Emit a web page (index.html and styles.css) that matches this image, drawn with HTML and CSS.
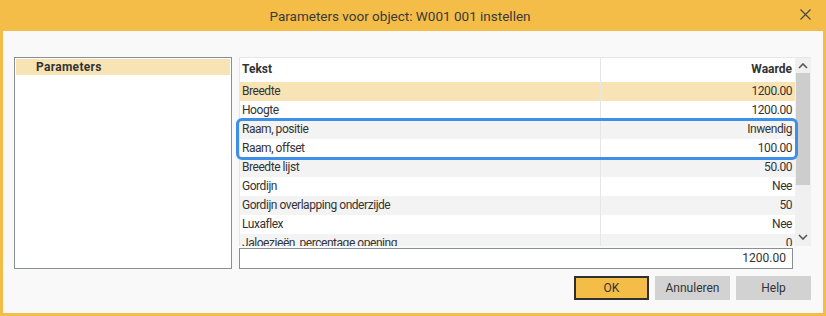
FILE: index.html
```html
<!DOCTYPE html>
<html lang="nl">
<head>
  <meta charset="UTF-8" />
  <title>Parameters voor object</title>
  <link rel="stylesheet" href="styles.css">
</head>
<body>
  <div class="dialog">
    <header class="titlebar">
      <span class="title">Parameters voor object: W001 001 instellen</span>
      <button class="close" aria-label="Sluiten">
        <svg width="11" height="11" viewBox="0 0 11 11"><path d="M0.5 0.5 L10.5 10.5 M10.5 0.5 L0.5 10.5" stroke="#444" stroke-width="1.1" fill="none"/></svg>
      </button>
    </header>

    <main class="content">
      <div class="panels">
        <div class="tree">
          <div class="tree-item">Parameters</div>
        </div>

        <div class="grid-col">
          <div class="grid">
            <div class="rows">
              <div class="row head"><span>Tekst</span><span>Waarde</span></div>
              <div class="row selected"><span>Breedte</span><span>1200.00</span></div>
              <div class="row"><span>Hoogte</span><span>1200.00</span></div>
              <div class="group">
                <div class="row alt"><span>Raam, positie</span><span>Inwendig</span></div>
                <div class="row"><span>Raam, offset</span><span>100.00</span></div>
              </div>
              <div class="row alt"><span>Breedte lijst</span><span>50.00</span></div>
              <div class="row"><span>Gordijn</span><span>Nee</span></div>
              <div class="row alt"><span>Gordijn overlapping onderzijde</span><span>50</span></div>
              <div class="row"><span>Luxaflex</span><span>Nee</span></div>
              <div class="row alt last"><span>Jaloezieën, percentage opening</span><span>0</span></div>
            </div>
            <div class="scrollbar">
              <div class="arrow up">
                <svg width="10" height="6" viewBox="0 0 10 6"><path d="M1 5 L5 1 L9 5" stroke="#555" stroke-width="1.6" fill="none"/></svg>
              </div>
              <div class="thumb"></div>
              <div class="track"></div>
              <div class="arrow down">
                <svg width="10" height="6" viewBox="0 0 10 6"><path d="M1 1 L5 5 L9 1" stroke="#555" stroke-width="1.6" fill="none"/></svg>
              </div>
            </div>
          </div>
          <div class="value-input">1200.00</div>
        </div>
      </div>

      <div class="actions">
        <button class="btn primary">OK</button>
        <button class="btn">Annuleren</button>
        <button class="btn">Help</button>
      </div>
    </main>
  </div>
</body>
</html>
```

FILE: styles.css
```css
:root {
  --accent: #f3bd48;
  --select: #f8e3b5;
  --text: #333;
  --line: #e6e6e6;
  --frame: #8a8f96;
  --focus: #3d8fe8;
}

* {
  margin: 0;
  padding: 0;
  box-sizing: border-box;
}

body {
  font-family: Roboto, 'Liberation Sans', sans-serif;
  font-size: 12px;
  color: var(--text);
  background: #fff;
}

.dialog {
  width: 826px;
  height: 316px;
  border: 3px solid var(--accent);
  border-top: none;
  background: #f9f9f9;
  display: flex;
  flex-direction: column;
}

.titlebar {
  height: 31px;
  margin: 0 -3px;
  background: var(--accent);
  display: flex;
  align-items: center;
  padding-right: 15px;
}

.title {
  flex: 1;
  text-align: center;
  font-size: 13.5px;
  color: #3a3a3a;
}

.close {
  background: none;
  border: none;
  width: 11px;
  height: 11px;
  display: flex;
  margin-top: -2px;
}

.content {
  flex: 1;
  display: flex;
  flex-direction: column;
  padding: 26px 12px 0 11px;
}

.panels {
  display: flex;
  gap: 7px;
  height: 212px;
}

.tree {
  width: 218px;
  border: 1px solid var(--frame);
  background: #fff;
  padding: 1px;
}

.tree-item {
  height: 16px;
  line-height: 16px;
  padding-left: 20px;
  background: var(--select);
  font-weight: bold;
  letter-spacing: 0.3px;
}

.grid-col {
  flex: 1;
  display: flex;
  flex-direction: column;
  gap: 2px;
}

.grid {
  height: 189px;
  display: flex;
  border-top: 1px solid var(--line);
  border-left: 1px solid var(--line);
  background: #fff;
}

.rows {
  flex: 1;
}

.row {
  display: grid;
  grid-template-columns: 361px 1fr;
  height: 19px;
  line-height: 19px;
  background: #fff;
  letter-spacing: -0.45px;
}

.row span {
  padding: 0 3px 0 2px;
  white-space: nowrap;
}

.row span:first-child {
  border-right: 1px solid var(--line);
}

.row span:last-child {
  text-align: right;
}

.row.head {
  height: 24px;
  line-height: 23px;
  font-weight: bold;
  letter-spacing: 0;
}

.row.alt {
  background: #f3f3f3;
}

.row.selected {
  background: var(--select);
}

.row.last {
  height: 12px;
  overflow: hidden;
}

.group {
  position: relative;
}

.group::after {
  content: '';
  position: absolute;
  inset: -2px -3px -2px -4px;
  border: 3px solid var(--focus);
  border-radius: 6px;
  pointer-events: none;
}

.scrollbar {
  width: 16px;
  background: #f0f0f0;
  display: flex;
  flex-direction: column;
}

.arrow {
  height: 15px;
  display: flex;
  align-items: center;
  justify-content: center;
}

.arrow.down {
  height: 18px;
}

.thumb {
  height: 112px;
  margin: 0 1px;
  background: #cdcdcd;
}

.track {
  flex: 1;
}

.value-input {
  width: 554px;
  height: 21px;
  line-height: 19px;
  border: 1px solid var(--frame);
  background: #fff;
  text-align: right;
  padding-right: 6px;
}

.actions {
  display: flex;
  justify-content: flex-end;
  gap: 6px;
  margin-top: 7px;
}

.btn {
  width: 75px;
  height: 24px;
  border: none;
  background: #d2d2d2;
  font-family: inherit;
  font-size: 12px;
  color: var(--text);
}

.btn.primary {
  background: var(--accent);
  border: 2px solid #2f2f2f;
}
```
